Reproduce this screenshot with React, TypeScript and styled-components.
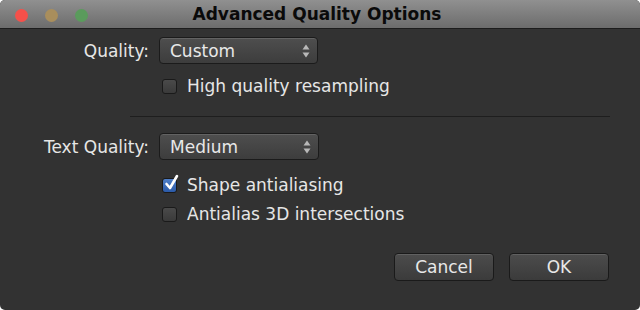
import React from "react";
import styled, { createGlobalStyle } from "styled-components";

const Global = createGlobalStyle`
  html, body { margin: 0; padding: 0; background: #ffffff; }
  body { width: 640px; height: 310px; overflow: hidden; }
`;

const Window = styled.div`
  width: 640px;
  height: 310px;
  border-radius: 5px;
  overflow: hidden;
  background: #323232;
  display: flex;
  flex-direction: column;
  font-family: "DejaVu Sans", "Liberation Sans", sans-serif;
`;

const TitleBar = styled.div`
  height: 28px;
  flex: none;
  background: linear-gradient(#909090, #6c6c6c);
  border-bottom: 1px solid #1c1c1c;
  position: relative;
  display: flex;
  align-items: center;
  justify-content: center;
`;

const Lights = styled.div`
  position: absolute;
  left: 15px;
  top: 9px;
  display: flex;
  gap: 17px;
`;

const Light = styled.span<{ $c: string }>`
  width: 13px;
  height: 13px;
  border-radius: 50%;
  background: ${(p) => p.$c};
`;

const Title = styled.div`
  font-size: 17px;
  font-weight: bold;
  color: #0a0a0a;
  padding-right: 6px;
`;

const Body = styled.div`
  flex: 1;
  display: flex;
  flex-direction: column;
  padding: 8px 30px 0 0;
`;

const Row = styled.div`
  display: grid;
  grid-template-columns: 149px 1fr;
  column-gap: 10px;
  align-items: center;
  height: 27px;
`;

const Label = styled.div`
  text-align: right;
  color: #e6e6e6;
  font-size: 17px;
`;

const Popup = styled.div<{ $w: number }>`
  width: ${(p) => p.$w}px;
  height: 27px;
  box-sizing: border-box;
  border: 1px solid #1b1b1b;
  border-radius: 4px;
  background: linear-gradient(#4e4e4e, #3d3d3d);
  box-shadow: inset 0 1px 0 rgba(255,255,255,0.12);
  display: flex;
  align-items: center;
  justify-content: space-between;
  padding: 0 6px 0 10px;
  color: #e8e8e8;
  font-size: 17px;
`;

const Arrows = styled.svg`
  width: 10px;
  height: 16px;
`;

const CheckRow = styled.label<{ $top: number }>`
  display: flex;
  align-items: center;
  gap: 10px;
  margin-left: 162px;
  margin-top: ${(p) => p.$top}px;
  height: 20px;
  color: #e6e6e6;
  font-size: 17px;
`;

const Box = styled.span<{ $on?: boolean }>`
  width: 15px;
  height: 15px;
  box-sizing: border-box;
  border-radius: 3px;
  border: 1px solid #1a1a1a;
  background: ${(p) =>
    p.$on ? "linear-gradient(#4f7fc8, #2b5aa8)" : "linear-gradient(#4a4a4a, #3a3a3a)"};
  position: relative;
  flex: none;
`;

const Tick = styled.svg`
  position: absolute;
  left: 1px;
  top: -5px;
  width: 15px;
  height: 17px;
`;

const Separator = styled.div`
  height: 1px;
  background: #1e1e1e;
  margin: 20px 0 16px 130px;
`;

const Buttons = styled.div`
  display: flex;
  justify-content: flex-end;
  gap: 15px;
  margin-top: auto;
  margin-bottom: 29px;
  margin-right: 1px;
`;

const Button = styled.div`
  width: 100px;
  height: 28px;
  box-sizing: border-box;
  border: 1px solid #1a1a1a;
  border-radius: 4px;
  background: linear-gradient(#4c4c4c, #3b3b3b);
  box-shadow: inset 0 1px 0 rgba(255,255,255,0.12);
  display: flex;
  align-items: center;
  justify-content: center;
  color: #e8e8e8;
  font-size: 17px;
`;

const UpDown = () => (
  <Arrows viewBox="0 0 10 16">
    <path d="M5 1.5 L8.5 6.5 L1.5 6.5 Z" fill="#b8b8b8" />
    <path d="M5 14.5 L8.5 9.5 L1.5 9.5 Z" fill="#b8b8b8" />
  </Arrows>
);

export default function App() {
  return (
    <>
      <Global />
      <Window>
        <TitleBar>
          <Lights>
            <Light $c="#f5504a" />
            <Light $c="#a98e5c" />
            <Light $c="#5a9b5c" />
          </Lights>
          <Title>Advanced Quality Options</Title>
        </TitleBar>
        <Body>
          <Row>
            <Label>Quality:</Label>
            <Popup $w={159}>
              <span>Custom</span>
              <UpDown />
            </Popup>
          </Row>
          <CheckRow $top={12}>
            <Box />
            <span>High quality resampling</span>
          </CheckRow>
          <Separator />
          <Row>
            <Label>Text Quality:</Label>
            <Popup $w={160}>
              <span>Medium</span>
              <UpDown />
            </Popup>
          </Row>
          <CheckRow $top={15}>
            <Box $on>
              <Tick viewBox="0 0 15 17">
                <path d="M2.5 10 L6 14 L13 2" fill="none" stroke="#ffffff" strokeWidth="2.6" strokeLinecap="round" strokeLinejoin="round" />
              </Tick>
            </Box>
            <span>Shape antialiasing</span>
          </CheckRow>
          <CheckRow $top={9}>
            <Box />
            <span>Antialias 3D intersections</span>
          </CheckRow>
          <Buttons>
            <Button>Cancel</Button>
            <Button>OK</Button>
          </Buttons>
        </Body>
      </Window>
    </>
  );
}
